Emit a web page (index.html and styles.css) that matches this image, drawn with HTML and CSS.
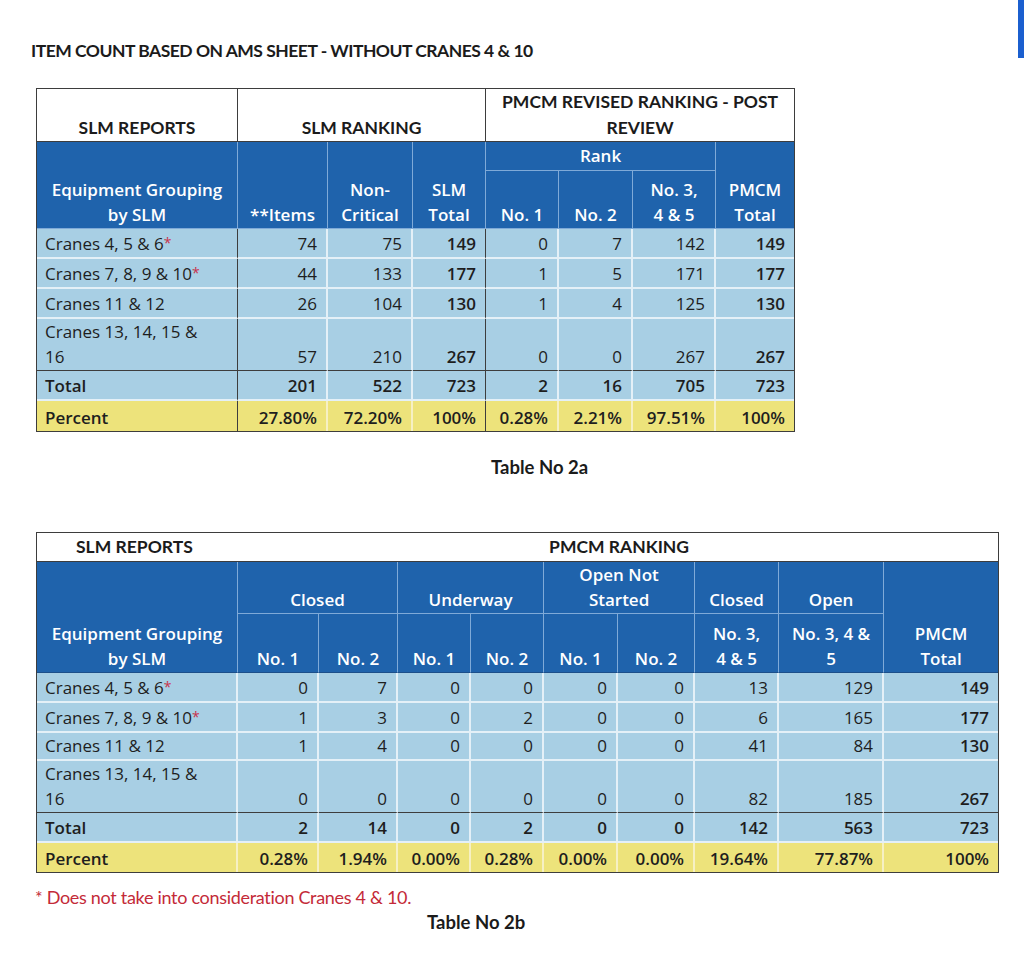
FILE: index.html
```html
<!DOCTYPE html>
<html lang="en">
<head>
<meta charset="utf-8">
<title>Item count based on AMS sheet</title>
<link rel="stylesheet" href="styles.css">
</head>
<body>
<div class="edge"></div>
<main class="page">
  <h1 class="title">ITEM COUNT BASED ON AMS SHEET - WITHOUT CRANES 4 &amp; 10</h1>

  <table class="t t1">
    <colgroup>
      <col style="width:201px"><col style="width:90px"><col style="width:85px"><col style="width:73px">
      <col style="width:73px"><col style="width:74px"><col style="width:83px"><col style="width:78px">
    </colgroup>
    <tr class="r-white">
      <td class="wh c">SLM REPORTS</td>
      <td class="wh c" colspan="3">SLM RANKING</td>
      <td class="wh c last" colspan="4">PMCM REVISED RANKING - POST REVIEW</td>
    </tr>
    <tr class="r-rank">
      <td class="hd" rowspan="2">Equipment Grouping<br>by SLM</td>
      <td class="hd" rowspan="2">**Items</td>
      <td class="hd" rowspan="2">Non-<br>Critical</td>
      <td class="hd" rowspan="2">SLM<br>Total</td>
      <td class="hd mid" colspan="3">Rank</td>
      <td class="hd last" rowspan="2">PMCM<br>Total</td>
    </tr>
    <tr class="r-sub1">
      <td class="hd">No. 1</td>
      <td class="hd">No. 2</td>
      <td class="hd">No. 3,<br>4 &amp; 5</td>
    </tr>
    <tr class="r-d">
      <td class="lbl dv">Cranes 4, 5 &amp; 6<span class="ast">*</span></td>
      <td>74</td><td>75</td><td class="b dv">149</td>
      <td>0</td><td>7</td><td>142</td><td class="b last">149</td>
    </tr>
    <tr class="r-d">
      <td class="lbl dv">Cranes 7, 8, 9 &amp; 10<span class="ast">*</span></td>
      <td>44</td><td>133</td><td class="b dv">177</td>
      <td>1</td><td>5</td><td>171</td><td class="b last">177</td>
    </tr>
    <tr class="r-d r-d3">
      <td class="lbl dv">Cranes 11 &amp; 12</td>
      <td>26</td><td>104</td><td class="b dv">130</td>
      <td>1</td><td>4</td><td>125</td><td class="b last">130</td>
    </tr>
    <tr class="r-tall">
      <td class="lbl dv dt">Cranes 13, 14, 15 &amp;<br>16</td>
      <td class="dt">57</td><td class="dt">210</td><td class="b dv dt">267</td>
      <td class="dt">0</td><td class="dt">0</td><td class="dt">267</td><td class="b last dt">267</td>
    </tr>
    <tr class="r-d r-tot">
      <td class="lbl b dv">Total</td>
      <td class="b">201</td><td class="b">522</td><td class="b dv">723</td>
      <td class="b">2</td><td class="b">16</td><td class="b">705</td><td class="b last">723</td>
    </tr>
    <tr class="r-pct">
      <td class="lbl b dv">Percent</td>
      <td class="b">27.80%</td><td class="b">72.20%</td><td class="b dv">100%</td>
      <td class="b">0.28%</td><td class="b">2.21%</td><td class="b">97.51%</td><td class="b last">100%</td>
    </tr>
  </table>

  <p class="caption cap-a">Table No 2a</p>

  <table class="t t2">
    <colgroup>
      <col style="width:201px"><col style="width:81px"><col style="width:79px"><col style="width:73px"><col style="width:73px">
      <col style="width:74px"><col style="width:77px"><col style="width:84px"><col style="width:105px"><col style="width:114px">
    </colgroup>
    <tr class="r-white2">
      <td class="wh2 left" colspan="5">SLM REPORTS</td>
      <td class="wh2 right" colspan="5">PMCM RANKING</td>
    </tr>
    <tr class="r-grp">
      <td class="hd hb" rowspan="2">Equipment Grouping<br>by SLM</td>
      <td class="hd" colspan="2">Closed</td>
      <td class="hd" colspan="2">Underway</td>
      <td class="hd" colspan="2">Open Not<br>Started</td>
      <td class="hd">Closed</td>
      <td class="hd">Open</td>
      <td class="hd hb last" rowspan="2">PMCM<br>Total</td>
    </tr>
    <tr class="r-sub2">
      <td class="hd hb">No. 1</td>
      <td class="hd hb">No. 2</td>
      <td class="hd hb">No. 1</td>
      <td class="hd hb">No. 2</td>
      <td class="hd hb">No. 1</td>
      <td class="hd hb">No. 2</td>
      <td class="hd hb">No. 3,<br>4 &amp; 5</td>
      <td class="hd hb">No. 3, 4 &amp;<br>5</td>
    </tr>
    <tr class="r-d">
      <td class="lbl">Cranes 4, 5 &amp; 6<span class="ast">*</span></td>
      <td>0</td><td>7</td><td>0</td><td>0</td><td>0</td><td>0</td><td>13</td><td>129</td><td class="b last">149</td>
    </tr>
    <tr class="r-d">
      <td class="lbl">Cranes 7, 8, 9 &amp; 10<span class="ast">*</span></td>
      <td>1</td><td>3</td><td>0</td><td>2</td><td>0</td><td>0</td><td>6</td><td>165</td><td class="b last">177</td>
    </tr>
    <tr class="r-d r-d3b">
      <td class="lbl">Cranes 11 &amp; 12</td>
      <td>1</td><td>4</td><td>0</td><td>0</td><td>0</td><td>0</td><td>41</td><td>84</td><td class="b last">130</td>
    </tr>
    <tr class="r-tall">
      <td class="lbl dt">Cranes 13, 14, 15 &amp;<br>16</td>
      <td class="dt">0</td><td class="dt">0</td><td class="dt">0</td><td class="dt">0</td><td class="dt">0</td><td class="dt">0</td><td class="dt">82</td><td class="dt">185</td><td class="b last dt">267</td>
    </tr>
    <tr class="r-d r-tot">
      <td class="lbl b">Total</td>
      <td class="b">2</td><td class="b">14</td><td class="b">0</td><td class="b">2</td><td class="b">0</td><td class="b">0</td><td class="b">142</td><td class="b">563</td><td class="b last">723</td>
    </tr>
    <tr class="r-pct2">
      <td class="lbl b">Percent</td>
      <td class="b">0.28%</td><td class="b">1.94%</td><td class="b">0.00%</td><td class="b">0.28%</td><td class="b">0.00%</td><td class="b">0.00%</td><td class="b">19.64%</td><td class="b">77.87%</td><td class="b last">100%</td>
    </tr>
  </table>

  <p class="note">* Does not take into consideration Cranes 4 &amp; 10.</p>
  <p class="caption cap-b">Table No 2b</p>
</main>
</body>
</html>
```

FILE: styles.css
```css
* { box-sizing: border-box; }

html, body {
  margin: 0;
  padding: 0;
  background: #ffffff;
}

body {
  font-family: "Lato", "Liberation Sans", sans-serif;
  color: #1d1d1d;
}

.edge {
  position: absolute;
  top: 0;
  right: 0;
  width: 6px;
  height: 58px;
  background: #1b5fcf;
}

.page {
  padding: 40px 0 0 36px;
}

.title {
  margin: 0 0 26px -5px;
  font-family: "Lato", "Liberation Sans", sans-serif;
  font-weight: 700;
  font-size: 17.5px;
  line-height: 22px;
  letter-spacing: -0.5px;
  color: #1b1b1b;
}

.t {
  border-collapse: separate;
  border-spacing: 0;
  table-layout: fixed;
  border: 1.5px solid #3d3d3d;
  font-family: "Open Sans", "Liberation Sans", sans-serif;
  font-size: 17px;
  color: #1e1e1e;
}

.t1 { width: 758px; }
.t2 { width: 962px; }

.t td {
  padding: 0 9px 1px 9px;
  line-height: 25px;
  vertical-align: bottom;
  text-align: right;
  background: #a8cfe4;
  border-right: 2px solid #e4f0f7;
  border-bottom: 2px solid #e4f0f7;
  white-space: nowrap;
}

.t td.last { border-right: 0; }

.t td.lbl { text-align: left; padding-left: 8px; }

.t td.b { font-weight: 600; }

.t td.dv { border-right: 1.5px solid #3d3d3d; }

.t td.dt { border-bottom: 1.5px solid #3d3d3d; }

.ast {
  color: #c8324c;
  font-size: 14px;
  vertical-align: 2px;
}

/* white title row */
.t td.wh {
  background: #ffffff;
  font-family: "Lato", "Liberation Sans", sans-serif;
  font-weight: 700;
  font-size: 17.5px;
  line-height: 26px;
  text-align: center;
  white-space: normal;
  color: #1b1b1b;
  padding: 0 8px 0 8px;
  border-right: 1.5px solid #3d3d3d;
  border-bottom: 1.5px solid #3d3d3d;
}
.t td.wh.last { border-right: 0; }
.t1 td.wh:last-child { padding: 0 12px; }

.r-white { height: 52px; }

/* blue header */
.t td.hd {
  background: #1f63ac;
  color: #ffffff;
  font-weight: 600;
  text-align: center;
  padding: 0 2px 1px 2px;
  border-right: 1px solid #7faad8;
  border-bottom: 1px solid #7faad8;
}
.t td.hd.last { border-right: 0; }
.t td.hd.mid { vertical-align: middle; }

.r-rank { height: 29px; }
.r-sub1 { height: 58px; }

.r-d { height: 30px; }
.r-tall { height: 51px; }
.r-tot td { border-bottom-color: #e4f0f7; }

.r-pct td {
  background: #ede37b;
  height: 30px;
  border-bottom: 0;
  border-right-color: #f6f0c4;
}
.r-pct td.dv { border-right-color: #3d3d3d; }

.caption {
  margin: 24px 0 0 0;
  font-family: "Lato", "Liberation Sans", sans-serif;
  font-weight: 700;
  font-size: 18.5px;
  line-height: 22px;
  color: #1b1b1b;
}
.cap-a { padding-left: 455px; margin-bottom: 54px; }
.cap-b { padding-left: 391px; margin-top: 3px; }

/* table 2 */
.t td.wh2 {
  background: #ffffff;
  font-family: "Lato", "Liberation Sans", sans-serif;
  font-weight: 700;
  font-size: 17.5px;
  line-height: 24px;
  text-align: left;
  color: #1b1b1b;
  border-right: 0;
  border-bottom: 1.5px solid #3d3d3d;
  padding: 0 0 2px 0;
}
.t td.wh2.left { padding-left: 39px; }
.t td.wh2.right { padding-left: 5px; }

.r-white2 { height: 29px; }
.r-grp { height: 52px; }
.r-sub2 { height: 59px; }

.t td.hd.hb { border-bottom: 1.5px solid #1c4f8a; }

.r-d3b { height: 28px; }
.r-pct2 td {
  background: #ede37b;
  height: 29px;
  border-bottom: 0;
  border-right-color: #f6f0c4;
}

.note {
  margin: 13px 0 0 -1px;
  font-family: "Lato", "Liberation Sans", sans-serif;
  font-size: 18px;
  line-height: 22px;
  letter-spacing: -0.3px;
  color: #c42a38;
}
```
